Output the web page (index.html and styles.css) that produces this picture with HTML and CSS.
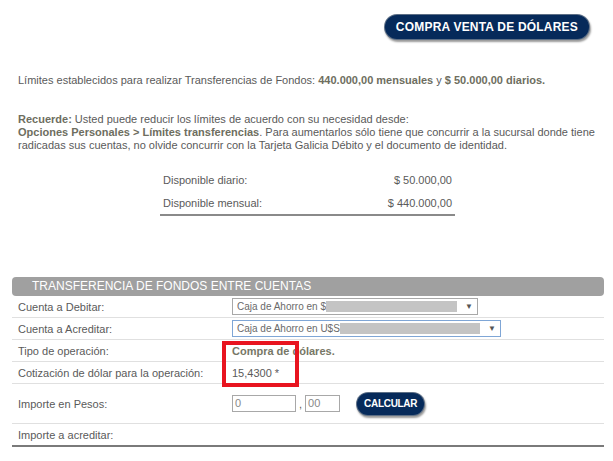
FILE: index.html
```html
<!DOCTYPE html>
<html lang="es">
<head>
    <meta charset="UTF-8">
    <title>Transferencia de fondos</title>
    <link rel="stylesheet" href="styles.css">
</head>
<body>
    <div class="top">
        <a class="btn-azul btn-grande" href="#">COMPRA VENTA DE DÓLARES</a>
    </div>

    <p class="limites">Límites establecidos para realizar Transferencias de Fondos: <b>440.000,00 mensuales</b> y <b>$ 50.000,00 diarios.</b></p>

    <p class="aviso"><b>Recuerde:</b> Usted puede reducir los límites de acuerdo con su necesidad desde:<br>
    <b>Opciones Personales &gt; Límites transferencias</b>. Para aumentarlos sólo tiene que concurrir a la sucursal donde tiene radicadas sus cuentas, no olvide concurrir con la Tarjeta Galicia Débito y el documento de identidad.</p>

    <div class="disponible">
        <div class="disp-fila"><span>Disponible diario:</span><span>$ 50.000,00</span></div>
        <div class="disp-fila"><span>Disponible mensual:</span><span>$ 440.000,00</span></div>
    </div>

    <div class="seccion">
        <div class="seccion-titulo">TRANSFERENCIA DE FONDOS ENTRE CUENTAS</div>

        <div class="fila">
            <div class="etiqueta">Cuenta a Debitar:</div>
            <div class="valor">
                <div class="combo combo-debito"><span class="combo-txt">Caja de Ahorro en $</span><span class="oculto"></span><span class="flecha">▼</span></div>
            </div>
        </div>
        <div class="fila">
            <div class="etiqueta">Cuenta a Acreditar:</div>
            <div class="valor">
                <div class="combo combo-credito"><span class="combo-txt">Caja de Ahorro en U$S</span><span class="oculto"></span><span class="flecha">▼</span></div>
            </div>
        </div>
        <div class="fila">
            <div class="etiqueta">Tipo de operación:</div>
            <div class="valor destacado">Compra de dólares.</div>
        </div>
        <div class="fila">
            <div class="etiqueta">Cotización de dólar para la operación:</div>
            <div class="valor">15,4300 *</div>
        </div>
        <div class="fila fila-alta">
            <div class="etiqueta">Importe en Pesos:</div>
            <div class="valor importe">
                <span class="campo campo-entero">0</span>
                <span class="coma">,</span>
                <span class="campo campo-dec">00</span>
                <a class="btn-azul btn-chico" href="#">CALCULAR</a>
            </div>
        </div>
        <div class="fila fila-ultima">
            <div class="etiqueta">Importe a acreditar:</div>
            <div class="valor"></div>
        </div>

        <!-- marca roja sobre tipo y cotizacion -->
        <div class="marca"></div>
    </div>
</body>
</html>
```

FILE: styles.css
```css
body {
    margin: 0;
    width: 613px;
    font-family: "Liberation Sans", Arial, sans-serif;
    font-size: 11px;
    color: #5a5a5a;
    background: #fff;
}

b {
    color: #6e6e60;
}

.top {
    display: flex;
    justify-content: flex-end;
    padding: 15px 24px 0 0;
}

.btn-azul {
    display: inline-block;
    background: #062a5a;
    color: #fff;
    text-decoration: none;
    font-weight: bold;
    white-space: nowrap;
    border-radius: 13px;
    box-shadow: 0 0 0 1px #5d6f86, 1px 2px 2px 1px #9a9a9a;
}

.btn-grande {
    font-size: 12px;
    letter-spacing: 0.2px;
    line-height: 24px;
    padding: 0 11px;
}

.btn-chico {
    font-size: 10px;
    line-height: 22px;
    padding: 0 7px;
    margin-left: 17px;
    letter-spacing: -0.3px;
}

.limites {
    margin: 35px 0 0 18px;
}

.aviso {
    margin: 27px 16px 0 18px;
    line-height: 13px;
}

.disponible {
    display: flex;
    flex-direction: column;
    gap: 2px;
    width: 295px;
    margin: 18px 0 0 160px;
    border-bottom: 2px solid #8a8a8a;
}

.disp-fila {
    display: flex;
    justify-content: space-between;
    padding: 0 3px;
    line-height: 21px;
}

.seccion {
    position: relative;
    margin: 61px 9px 0 12px;
}

.seccion-titulo {
    background: #a0a0a0;
    color: #fff;
    font-size: 12px;
    line-height: 19px;
    padding-left: 20px;
    border-radius: 4px;
}

.fila {
    display: grid;
    grid-template-columns: 220px 1fr;
    align-items: center;
    height: 21px;
    border-bottom: 1px solid #e0e0e0;
}

.fila-alta {
    height: 39px;
}

.fila-ultima {
    border-bottom: 2px solid #7a7a7a;
}

.etiqueta {
    padding-left: 6px;
}

.destacado {
    font-weight: bold;
    color: #777766;
}

.combo {
    display: flex;
    align-items: center;
    height: 15px;
    border: 1px solid #a8a8a8;
    font-size: 10px;
    color: #6a6a6a;
    padding-left: 4px;
}

.combo-debito {
    width: 240px;
}

.combo-credito {
    width: 263px;
    border-color: #7fa6d6;
}

.combo-txt {
    white-space: nowrap;
}

.oculto {
    flex: 1;
    height: 11px;
    background: #c4c4c4;
    margin-right: 8px;
}

.flecha {
    font-size: 8px;
    width: 12px;
    color: #555;
}

.importe {
    display: flex;
    align-items: center;
}

.campo {
    display: inline-block;
    height: 15px;
    line-height: 15px;
    border: 1px solid #a8a8a8;
    color: #888;
    padding-left: 2px;
}

.campo-entero {
    width: 60px;
}

.campo-dec {
    width: 31px;
}

.coma {
    margin: 0 3px 0 3px;
}

.marca {
    position: absolute;
    left: 210px;
    top: 64px;
    width: 69px;
    height: 38px;
    border: 4px solid #e8141f;
}
```
